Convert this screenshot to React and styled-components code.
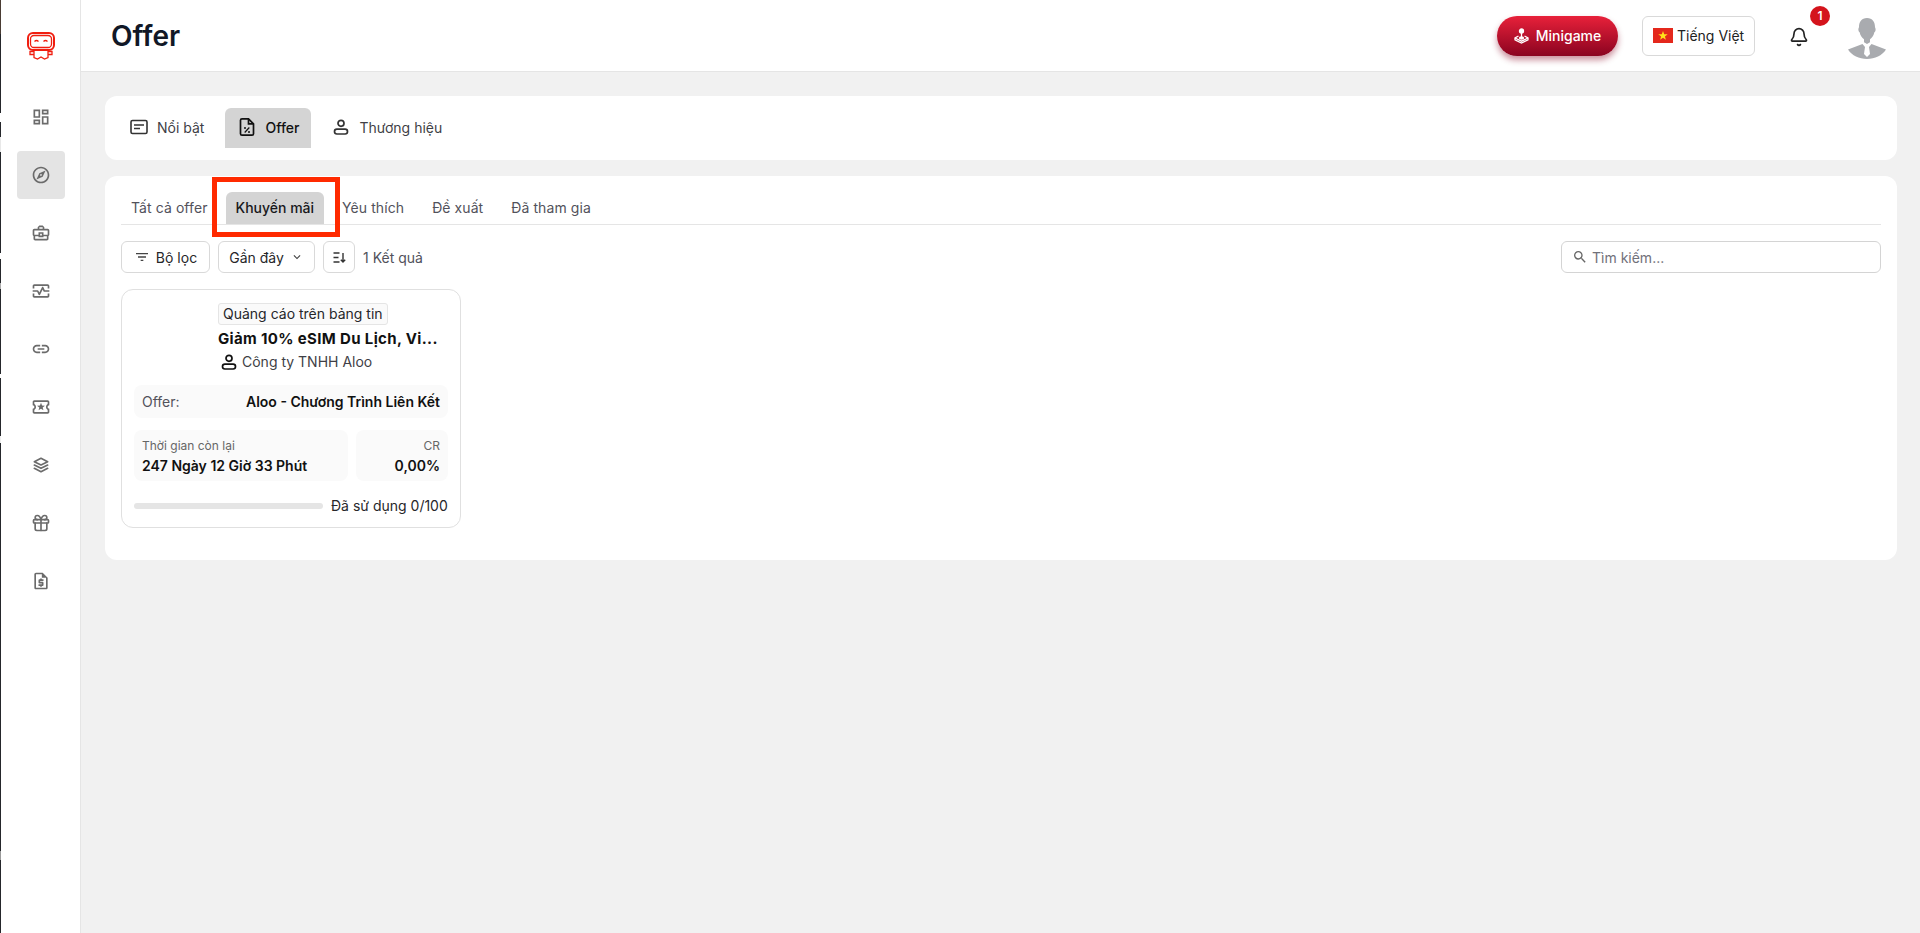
import React from "react";
import styled, { createGlobalStyle } from "styled-components";
import {
  MdOutlineDashboard, MdOutlineExplore, MdOutlineBusinessCenter, MdOutlineMonitorHeart,
  MdOutlineLink, MdOutlineLocalActivity, MdOutlineRequestQuote,
  MdOutlineFilterList, MdOutlineSearch, MdExpandMore,
} from "react-icons/md";
import { TbStack2, TbGift } from "react-icons/tb";
import { Bell } from "lucide-react";

const Global = createGlobalStyle`
  html, body { margin: 0; padding: 0; height: 100%; background: #f1f1f1; }
  body { font-family: Inter, "Noto Sans", sans-serif; color: #111827; overflow: hidden; }
  #root { height: 100%; }
  * { box-sizing: border-box; }
`;

const Shell = styled.div`
  position: relative;
  display: flex;
  height: 933px;
`;
const Edge = styled.div`
  width: 1px;
  flex: none;
  background: linear-gradient(#4a3c34 0 34px, #25272b 34px 113px, #fff 113px 122px, #25272b 122px 137px, #e8e8e8 137px 152px,
    #25272b 152px 253px, #fff 253px 259px, #25272b 259px 283px, #aaa 283px 289px, #25272b 289px 374px, #fff 374px 378px,
    #25272b 378px 436px, #eee 436px 443px, #25272b 443px 851px, #999 851px 860px, #25272b 860px 933px);
`;
const Sidebar = styled.aside`
  width: 80px;
  flex: none;
  background: #fff;
  border-right: 1px solid #e5e5e5;
  display: flex;
  flex-direction: column;
  align-items: center;
  padding: 32px 0 0 1px;
`;
const LogoBox = styled.div`
  height: 28px;
  margin-bottom: 33px;
  display: flex;
`;
const NavList = styled.nav`
  display: flex;
  flex-direction: column;
  gap: 10px;
`;
const NavItem = styled.div`
  width: 48px;
  height: 48px;
  border-radius: 4px;
  display: flex;
  align-items: center;
  justify-content: center;
  color: #6b6b6b;
  background: ${(p) => (p.$active ? "#e4e4e4" : "transparent")};
`;
const Main = styled.main`
  flex: 1;
  min-width: 0;
  display: flex;
  flex-direction: column;
`;
const Topbar = styled.header`
  height: 72px;
  flex: none;
  background: #fff;
  border-bottom: 1px solid #e5e5e5;
  display: flex;
  align-items: center;
  padding: 0 34px 0 30px;
`;
const Title = styled.h1`
  margin: 0;
  font-size: 28px;
  line-height: 36px;
  font-weight: 600;
  color: #111827;
  flex: 1;
`;
const GameButton = styled.button`
  width: 121px;
  height: 40px;
  padding: 0;
  border: 0;
  border-radius: 20px;
  background: linear-gradient(#e8213a, #8a0320);
  box-shadow: 0 4px 6px rgba(140, 10, 40, 0.45);
  color: #fff;
  font: 500 14px Inter, sans-serif;
  display: flex;
  align-items: center;
  justify-content: center;
  gap: 7px;
`;
const LangButton = styled.button`
  width: 113px;
  height: 40px;
  margin-left: 24px;
  padding: 0 0 0 10px;
  border: 1px solid #d9d9d9;
  border-radius: 6px;
  background: #fff;
  color: #222;
  font: 400 14px Inter, sans-serif;
  display: flex;
  align-items: center;
  gap: 4px;
`;
const BellWrap = styled.div`
  position: relative;
  margin: 2px 0 0 34px;
  width: 20px;
  height: 20px;
  color: #222;
`;
const Badge = styled.span`
  position: absolute;
  left: 21px;
  top: -21px;
  width: 20px;
  height: 20px;
  border-radius: 50%;
  background: #d4141c;
  color: #fff;
  font: 600 12px/20px Inter, sans-serif;
  text-align: center;
`;
const AvatarBox = styled.div`
  margin-left: 39px;
  display: flex;
  margin-top: 7px;
`;
const Content = styled.div`
  position: relative;
  padding: 24px 23px 0 24px;
  display: flex;
  flex-direction: column;
  gap: 16px;
`;
const Panel = styled.section`
  background: #fff;
  border-radius: 12px;
`;
const TopTabs = styled(Panel)`
  height: 64px;
  padding: 12px 12px 12px 12px;
  display: flex;
  gap: 8px;
`;
const TopTab = styled.div`
  height: 40px;
  padding: 0 12px 2px;
  display: flex;
  align-items: center;
  gap: 8px;
  font-size: 14px;
  font-weight: ${(p) => (p.$active ? 500 : 400)};
  color: ${(p) => (p.$active ? "#111" : "#3f3f46")};
  background: ${(p) => (p.$active ? "#d4d4d4" : "transparent")};
  border-radius: 6px 6px 0 0;
  &:first-child { padding-right: 13px; }
`;
const ListPanel = styled(Panel)`
  height: 384px;
  padding: 16px;
`;
const SubTabs = styled.div`
  display: flex;
  height: 33px;
  gap: 8px;
  border-bottom: 1px solid #e5e5e5;
`;
const SubTab = styled.div`
  height: 32px;
  padding: 0 10px;
  font-size: 14px;
  line-height: 31px;
  letter-spacing: ${(p) => (p.$active ? "0" : "0.08px")};
  font-weight: ${(p) => (p.$active ? 500 : 400)};
  color: ${(p) => (p.$active ? "#18181b" : "#52525b")};
  background: ${(p) => (p.$active ? "#d4d4d4" : "transparent")};
  border-radius: 6px 6px 0 0;
`;
const Toolbar = styled.div`
  display: flex;
  align-items: center;
  gap: 8px;
  margin-top: 16px;
  height: 32px;
`;
const OutlineBtn = styled.div`
  height: 32px;
  border: 1px solid #d9d9d9;
  border-radius: 6px;
  display: flex;
  align-items: center;
  justify-content: center;
  gap: 6px;
  font-size: 14px;
  color: #27272a;
  width: ${(p) => p.$w}px;
  svg { color: #444; }
`;
const ResultCount = styled.span`
  font-size: 14px;
  color: #52525b;
`;
const Search = styled.div`
  margin-left: auto;
  width: 320px;
  height: 32px;
  border: 1px solid #d4d4d4;
  border-radius: 6px;
  display: flex;
  align-items: center;
  gap: 4px;
  padding-left: 10px;
  font-size: 14px;
  color: #71717a;
  svg { color: #666; font-size: 16px; }
`;
const Card = styled.article`
  width: 340px;
  height: 239px;
  margin-top: 16px;
  border: 1px solid #e0e0e0;
  border-radius: 12px;
  padding: 13px 12px 0;
`;
const CardHead = styled.div`
  padding-left: 84px;
`;
const Tag = styled.span`
  display: inline-block;
  height: 22px;
  padding: 0 4px;
  font-size: 14px;
  line-height: 20px;
  border: 1px solid #e5e5e5;
  border-radius: 3px;
  background: #fafafa;
  color: #27272a;
  vertical-align: top;
`;
const CardTitle = styled.div`
  font-size: 15px;
  line-height: 22px;
  font-weight: 700;
  letter-spacing: 0.35px;
  color: #111;
  margin-top: 3px;
  white-space: nowrap;
`;
const Company = styled.div`
  display: flex;
  align-items: center;
  gap: 3px;
  margin-top: 2px;
  padding-left: 1px;
  font-size: 14px;
  line-height: 20px;
  color: #3f3f46;
`;
const OfferRow = styled.div`
  margin-top: 13px;
  height: 33px;
  border-radius: 8px;
  background: #fafafa;
  padding: 0 8px;
  display: flex;
  justify-content: space-between;
  align-items: center;
  font-size: 14px;
`;
const Muted = styled.span`
  color: #52525b;
`;
const Strong = styled.span`
  font-weight: 600;
  color: #111;
`;
const Stats = styled.div`
  margin-top: 12px;
  display: grid;
  grid-template-columns: 214px 92px;
  gap: 8px;
`;
const Stat = styled.div`
  height: 51px;
  border-radius: 8px;
  background: #fafafa;
  padding: 8px 8px 0;
  text-align: ${(p) => (p.$right ? "right" : "left")};
  small { display: block; font-size: 12px; line-height: 16px; color: #666; }
  b { display: block; margin-top: 2px; font-size: 14px; line-height: 20px; font-weight: 600; color: #111; }
`;
const Usage = styled.div`
  margin-top: 16px;
  display: flex;
  align-items: center;
  gap: 8px;
  font-size: 14px;
  color: #27272a;
  white-space: nowrap;
`;
const Track = styled.div`
  width: 189px;
  height: 6px;
  border-radius: 3px;
  background: #e5e5e5;
`;
const Highlight = styled.div`
  position: absolute;
  left: 131px;
  top: 105px;
  width: 128px;
  height: 60px;
  border: 5px solid #ff2a00;
  pointer-events: none;
`;

const Logo = () => (
  <svg width="28" height="28" viewBox="0 0 28 28" fill="none" stroke="#f01e10" strokeWidth="1.3">
    <rect x="1" y="1" width="26" height="17" rx="5" strokeWidth="2" />
    <rect x="3.500" y="3.500" width="21" height="12" rx="3.500" />
    <path d="M7.500 9.500q2-2 4 0M16.500 9.500q2-2 4 0" />
    <path d="M7 18v7.500l3.500 1.500 3.500-2 3.500 2 3.500-1.500V18" />
    <path d="M7 19.500H3v3h4M21 19.500h4v3h-4" />
  </svg>
);
const Joystick = () => (
  <svg width="15" height="16" viewBox="0 0 15 16" fill="none" stroke="#fff" strokeWidth="1.300">
    <circle cx="7.500" cy="3" r="2" fill="#fff" />
    <path d="M7.500 5v5" />
    <path d="M4.500 8 1 10v1.800L7.500 15l6.500-3.200V10l-3.500-2" />
    <path d="M1 10l6.500 3.200L14 10" />
    <ellipse cx="7.500" cy="10" rx="2" ry="1" fill="#fff" />
  </svg>
);
const Flag = () => (
  <svg width="20" height="15" viewBox="0 0 20 15">
    <rect width="20" height="15" fill="#e4281c" />
    <path d="M10 3l1.200 3.300h3.500l-2.800 2.100 1 3.400L10 9.800l-2.900 2 1-3.400-2.800-2.100h3.500z" fill="#ffe01a" />
  </svg>
);
const Avatar = () => (
  <svg width="38" height="42" viewBox="0 0 38 42" fill="#a9abaf">
    <path d="M19 0c5.500 0 8 4 8 9 0 1 .8 1 .6 3-.2 1.600-1 2-1.300 2.500-.7 3-2.300 5.500-4.300 6.700v3l-3 1.800-3-1.800v-3c-2-1.200-3.600-3.700-4.300-6.700-.3-.5-1.100-.9-1.300-2.500-.2-2 .6-2 .6-3 0-5 2.500-9 8-9z" />
    <path d="M14.500 26 0 31.500C4 37.500 11 41 19 41s15-3.500 19-9.500L23.500 26 21 29l1 7-3 3-3-3 1-7z" />
  </svg>
);
const CardIcon = () => (
  <svg width="20" height="20" viewBox="0 0 20 20" fill="none" stroke="#333" strokeWidth="1.600">
    <rect x="2" y="3.500" width="16" height="13" rx="1.500" />
    <path d="M5 8h10M5 11.500h6" strokeWidth="1.400" />
  </svg>
);
const OfferIcon = () => (
  <svg width="20" height="20" viewBox="0 0 20 20" fill="none" stroke="#111" strokeWidth="1.700">
    <path d="M5 1.800h6.500l5 5v9.900a1.500 1.500 0 0 1-1.500 1.500H5a1.500 1.500 0 0 1-1.500-1.500V3.300A1.500 1.500 0 0 1 5 1.800z" />
    <path d="M11.500 2v4.800h4.800" />
    <path d="M12.300 10.500 7.700 15.500" strokeWidth="1.200" />
    <circle cx="8" cy="11" r="1" fill="#111" stroke="none" />
    <circle cx="12" cy="15" r="1" fill="#111" stroke="none" />
  </svg>
);
const PersonIcon = ({ color = "#333" }) => (
  <svg width="20" height="20" viewBox="0 0 20 20" fill="none" stroke={color} strokeWidth="1.700">
    <circle cx="10" cy="6.300" r="3" />
    <rect x="3.500" y="12.200" width="13" height="4.800" rx="2.400" />
  </svg>
);
const SortIcon = () => (
  <svg width="15" height="15" viewBox="0 0 15 15" fill="none" stroke="#333" strokeWidth="1.400">
    <path d="M1.500 3h6M1.500 7.500h5M1.500 12h6M11 3v9M8.800 9.800 11 12l2.200-2.200" />
  </svg>
);

const nav = [MdOutlineDashboard, MdOutlineExplore, MdOutlineBusinessCenter, MdOutlineMonitorHeart, MdOutlineLink, MdOutlineLocalActivity, TbStack2, TbGift, MdOutlineRequestQuote];
const subTabs = ["Tất cả offer", "Khuyến mãi", "Yêu thích", "Đề xuất", "Đã tham gia"];

export default function App() {
  return (
    <Shell>
      <Global />
      <Edge />
      <Sidebar>
        <LogoBox><Logo /></LogoBox>
        <NavList>
          {nav.map((Icon, i) => (
            <NavItem key={i} $active={i === 1}><Icon size={20} /></NavItem>
          ))}
        </NavList>
      </Sidebar>
      <Main>
        <Topbar>
          <Title>Offer</Title>
          <GameButton><Joystick />Minigame</GameButton>
          <LangButton><Flag />Tiếng Việt</LangButton>
          <BellWrap><Bell size={20} strokeWidth={2} /><Badge>1</Badge></BellWrap>
          <AvatarBox><Avatar /></AvatarBox>
        </Topbar>
        <Content>
          <TopTabs>
            <TopTab><CardIcon />Nổi bật</TopTab>
            <TopTab $active><OfferIcon />Offer</TopTab>
            <TopTab><PersonIcon />Thương hiệu</TopTab>
          </TopTabs>
          <ListPanel>
            <SubTabs>
              {subTabs.map((t, i) => <SubTab key={t} $active={i === 1}>{t}</SubTab>)}
            </SubTabs>
            <Toolbar>
              <OutlineBtn $w={89}><MdOutlineFilterList size={16} />Bộ lọc</OutlineBtn>
              <OutlineBtn $w={97}>Gần đây<MdExpandMore size={14} /></OutlineBtn>
              <OutlineBtn $w={32}><SortIcon /></OutlineBtn>
              <ResultCount>1 Kết quả</ResultCount>
              <Search><MdOutlineSearch />Tìm kiếm...</Search>
            </Toolbar>
            <Card>
              <CardHead>
                <Tag>Quảng cáo trên bảng tin</Tag>
                <CardTitle>Giảm 10% eSIM Du Lịch, Vi...</CardTitle>
                <Company><PersonIcon color="#111" />Công ty TNHH Aloo</Company>
              </CardHead>
              <OfferRow><Muted>Offer:</Muted><Strong>Aloo - Chương Trình Liên Kết</Strong></OfferRow>
              <Stats>
                <Stat><small>Thời gian còn lại</small><b>247 Ngày 12 Giờ 33 Phút</b></Stat>
                <Stat $right><small>CR</small><b>0,00%</b></Stat>
              </Stats>
              <Usage><Track />Đã sử dụng 0/100</Usage>
            </Card>
          </ListPanel>
          <Highlight />
        </Content>
      </Main>
    </Shell>
  );
}
